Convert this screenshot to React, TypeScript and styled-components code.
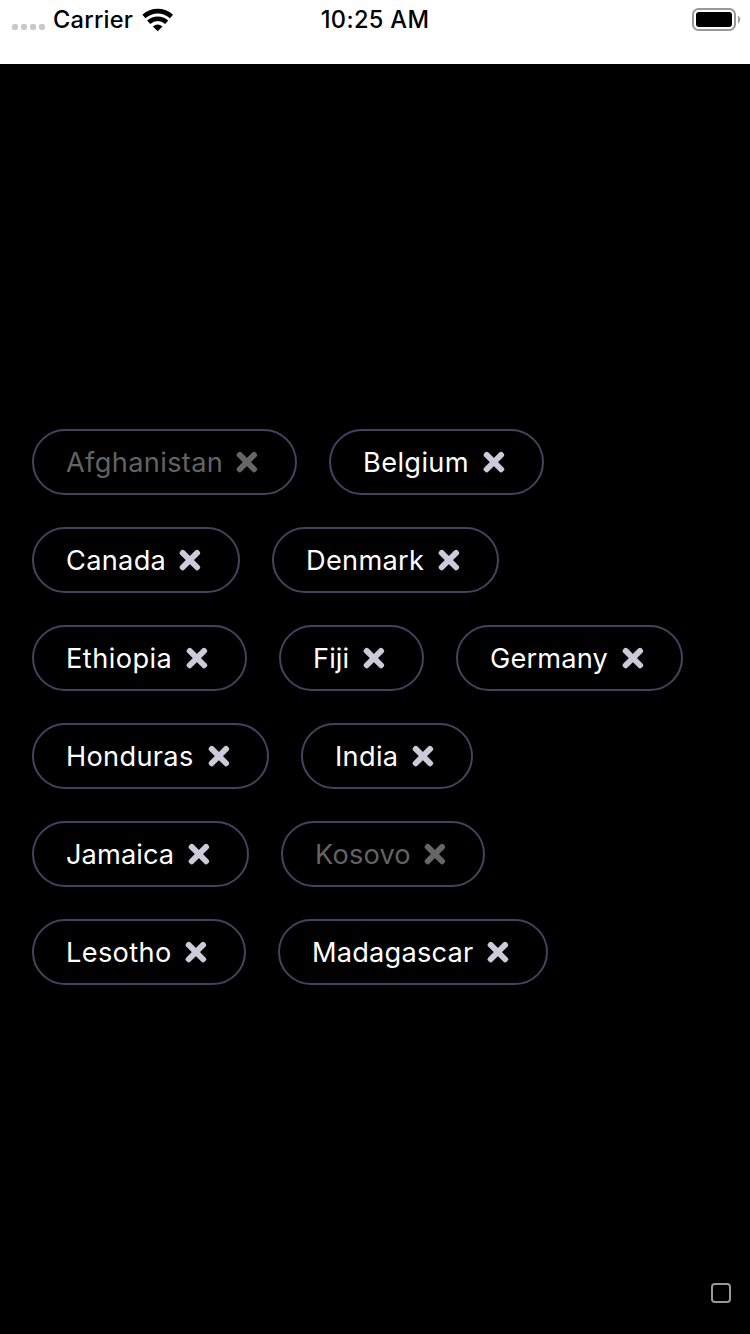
import React from "react";
import styled, { createGlobalStyle } from "styled-components";

const GlobalStyle = createGlobalStyle`
  * { box-sizing: border-box; }
  body { margin: 0; background: #000; font-family: Inter, "Liberation Sans", sans-serif; }
`;

const Screen = styled.main`
  display: flex;
  flex-direction: column;
  width: 750px;
  height: 1334px;
  background: #000;
  overflow: hidden;
`;

const StatusBar = styled.header`
  display: grid;
  grid-template-columns: 1fr auto 1fr;
  align-items: start;
  flex: none;
  height: 64px;
  background: #fff;
  color: #000;
  font-size: 23.6px;
  font-weight: 500;
  line-height: 40px;
`;

const CarrierGroup = styled.div`
  display: flex;
  height: 40px;
  padding-left: 12px;
`;

const SignalDots = styled.div`
  display: flex;
  gap: 3px;
  padding-top: 24px;
  margin-right: 8px;
`;

const Dot = styled.i`
  width: 6px;
  height: 6px;
  border-radius: 2px;
  background: #c9c9c9;
`;

const CarrierName = styled.span`
  width: 81px;
  letter-spacing: 0.25px;
  white-space: nowrap;
`;

const Wifi = styled.svg`
  width: 32px;
  height: 24px;
  margin: 8px 0 0 8px;
`;

const Clock = styled.time`
  letter-spacing: 0.35px;
  white-space: nowrap;
`;

const Battery = styled.svg`
  justify-self: end;
  width: 50px;
  height: 24px;
  margin: 8px 8px 0 0;
`;

const ChipArea = styled.section`
  flex: 1;
  padding: 365px 32px 0;
`;

const ChipList = styled.ul`
  display: flex;
  flex-wrap: wrap;
  gap: 32px;
  margin: 0;
  padding: 0;
  list-style: none;
`;

const Chip = styled.li<{ $width: number; $muted?: boolean }>`
  display: flex;
  align-items: center;
  justify-content: space-between;
  width: ${(p) => p.$width}px;
  height: 66px;
  padding: 0 36px 0 32px;
  border: 2px solid #45425f;
  border-radius: 33px;
  color: ${(p) => (p.$muted ? "#636363" : "#fff")};
`;

const Label = styled.span<{ $tracking: number }>`
  padding-top: 1px;
  font-size: 27.2px;
  font-weight: 380;
  line-height: 34px;
  letter-spacing: ${(p) => p.$tracking}px;
  white-space: nowrap;
`;

const Cross = styled.svg<{ $muted?: boolean }>`
  flex: none;
  width: 23px;
  height: 24px;
  fill: ${(p) => (p.$muted ? "#666" : "#cdcbda")};
`;

const Footer = styled.footer`
  display: flex;
  justify-content: flex-end;
  padding: 0 19px 31px 0;
`;

const Square = styled.div`
  width: 20px;
  height: 20px;
  border: 2px solid #999;
  border-radius: 4px;
`;

type Country = { name: string; width: number; tracking: number; muted?: boolean };

const countries: Country[] = [
  { name: "Afghanistan", width: 265, tracking: 0.35, muted: true },
  { name: "Belgium", width: 215, tracking: 0.37 },
  { name: "Canada", width: 208, tracking: 0.3 },
  { name: "Denmark", width: 227, tracking: 0.3 },
  { name: "Ethiopia", width: 215, tracking: 0.45 },
  { name: "Fiji", width: 145, tracking: 0.1 },
  { name: "Germany", width: 227, tracking: 0.15 },
  { name: "Honduras", width: 237, tracking: 0.3 },
  { name: "India", width: 172, tracking: 0.3 },
  { name: "Jamaica", width: 217, tracking: 0.1 },
  { name: "Kosovo", width: 204, tracking: 0.2, muted: true },
  { name: "Lesotho", width: 214, tracking: 0.35 },
  { name: "Madagascar", width: 270, tracking: 0.2 },
];

export default function App() {
  return (
    <Screen>
      <GlobalStyle />
      <StatusBar>
        <CarrierGroup>
          <SignalDots>
            <Dot />
            <Dot />
            <Dot />
            <Dot />
          </SignalDots>
          <CarrierName>Carrier</CarrierName>
          <Wifi viewBox="0 0 32 24" aria-label="Wi-Fi">
            <g fill="none" stroke="#000" strokeWidth="4.6">
              <path d="M1.9 8.5C10 1.3 21.4 1.3 29.5 8.5" />
              <path d="M6.7 14.3C12 9.5 19.4 9.5 24.7 14.3" />
            </g>
            <path d="M10.9 18.6Q15.7 14.3 20.5 18.6L15.7 23.2Z" />
          </Wifi>
        </CarrierGroup>
        <Clock>10:25 AM</Clock>
        <Battery viewBox="0 0 50 24" aria-label="Battery full">
          <rect x="1" y="1" width="42" height="21" rx="5.5" fill="none" stroke="#999" strokeWidth="2" />
          <rect x="4" y="4" width="36" height="15" rx="3" fill="#000" />
          <path d="M46 7.5Q48.2 9 48.2 11.5T46 15.5Z" fill="#999" />
        </Battery>
      </StatusBar>
      <ChipArea>
        <ChipList>
          {countries.map((c) => (
            <Chip key={c.name} $width={c.width} $muted={c.muted}>
              <Label $tracking={c.tracking}>{c.name}</Label>
              <Cross $muted={c.muted} viewBox="0 0 23 24" aria-hidden="true">
                <g transform="translate(10.9 12.1)">
                  <rect x="-13" y="-2.9" width="26" height="5.8" rx="2.5" transform="rotate(45)" />
                  <rect x="-13" y="-2.9" width="26" height="5.8" rx="2.5" transform="rotate(-45)" />
                </g>
              </Cross>
            </Chip>
          ))}
        </ChipList>
      </ChipArea>
      <Footer>
        <Square />
      </Footer>
    </Screen>
  );
}
